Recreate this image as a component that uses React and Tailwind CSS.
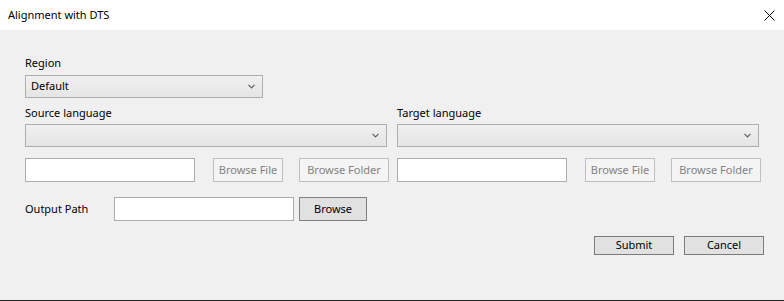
import React from "react";

const font = { fontFamily: '"Noto Sans", "Segoe UI", sans-serif' };

function Chevron() {
  return (
    <svg width="7" height="5" viewBox="0 0 7 5" className="shrink-0">
      <path d="M0.5 0.8 L3.5 3.8 L6.5 0.8" fill="none" stroke="#606060" strokeWidth="1.2" />
    </svg>
  );
}

function Combo({ w, text }) {
  return (
    <div
      className={`${w} h-[23px] border border-[#adadad] bg-gradient-to-b from-[#f0f0f0] to-[#e5e5e5] flex items-center justify-between pl-[5px] pr-[7px] text-[11px] text-black`}
    >
      <span>{text}</span>
      <Chevron />
    </div>
  );
}

function TextBox({ w }) {
  return <div className={`${w} h-[24px] border border-[#adadad] bg-white`} />;
}

function DisabledButton({ w, label }) {
  return (
    <div
      className={`${w} h-[24px] border border-[#bfbfbf] bg-[#f4f4f4] flex items-center justify-center text-[11px] text-[#838383]`}
    >
      {label}
    </div>
  );
}

function FileRow() {
  return (
    <div className="flex items-center">
      <TextBox w="w-[170px]" />
      <div className="ml-[18px]">
        <DisabledButton w="w-[70px]" label="Browse File" />
      </div>
      <div className="ml-[16px]">
        <DisabledButton w="w-[90px]" label="Browse Folder" />
      </div>
    </div>
  );
}

export default function App() {
  return (
    <div className="w-[784px] h-[301px] flex flex-col overflow-hidden" style={font}>
      <div className="h-[30px] bg-white flex items-center justify-between pl-[8px] pr-[9px]">
        <span className="text-[11px] text-black">Alignment with DTS</span>
        <svg width="11" height="11" viewBox="0 0 11 11">
          <path d="M0.5 0.5 L10.5 10.5 M10.5 0.5 L0.5 10.5" stroke="#000" strokeWidth="1" />
        </svg>
      </div>
      <div className="flex-1 bg-[#f0f0f0] border-b border-[#222] pl-[25px] flex flex-col text-[11px] text-black">
        <div className="mt-[24px] h-[17px] leading-[17px]">Region</div>
        <div className="mt-[4px]">
          <Combo w="w-[238px]" text="Default" />
        </div>
        <div className="flex mt-[6px] h-[17px] leading-[17px]">
          <div className="w-[372px]">Source language</div>
          <div>Target language</div>
        </div>
        <div className="flex mt-[3px]">
          <Combo w="w-[362px]" text="" />
          <div className="ml-[10px]">
            <Combo w="w-[362px]" text="" />
          </div>
        </div>
        <div className="flex mt-[11px]">
          <div className="w-[372px]">
            <FileRow />
          </div>
          <FileRow />
        </div>
        <div className="flex items-center mt-[15px]">
          <div className="w-[89px]">Output Path</div>
          <TextBox w="w-[180px]" />
          <div className="ml-[5px] w-[68px] h-[24px] border border-[#808080] bg-[#e1e1e1] flex items-center justify-center">
            Browse
          </div>
        </div>
        <div className="flex justify-end mt-[15px] pr-[20px] gap-[10px]">
          <div className="w-[80px] h-[19px] border border-[#7a7a7a] bg-[#e1e1e1] flex items-center justify-center">
            Submit
          </div>
          <div className="w-[80px] h-[19px] border border-[#7a7a7a] bg-[#e1e1e1] flex items-center justify-center">
            Cancel
          </div>
        </div>
      </div>
    </div>
  );
}
